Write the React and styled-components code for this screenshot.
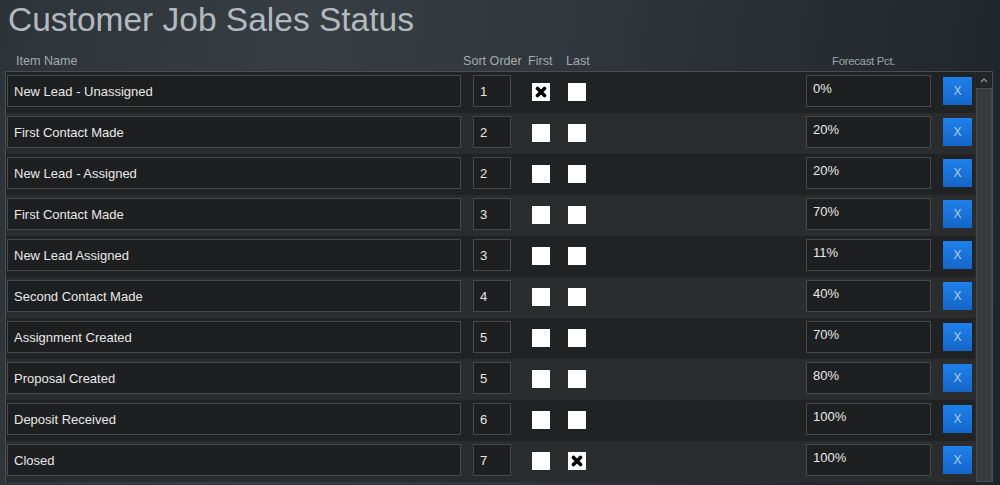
import React from "react";
import styled, { createGlobalStyle } from "styled-components";

const Global = createGlobalStyle`
  html, body { margin: 0; padding: 0; }
  body {
    width: 1000px;
    height: 485px;
    overflow: hidden;
    font-family: "Liberation Sans", Arial, sans-serif;
    background: linear-gradient(100deg, #2c3339 0%, #363d43 28%, #30373d 52%, #262c31 78%, #1f2429 100%);
  }
`;

const Page = styled.div`
  width: 1000px;
  height: 485px;
  display: flex;
  flex-direction: column;
`;

const Title = styled.h1`
  margin: 1px 0 0 8px;
  font-weight: normal;
  font-size: 33.5px;
  line-height: 38px;
  color: #b3babf;
`;

const HeaderRow = styled.div`
  margin-top: 14px;
  height: 16px;
  padding-left: 16px;
  display: flex;
  align-items: center;
  font-size: 12.6px;
  line-height: 16px;
  color: #a7abae;
`;

const HeadLabel = styled.span`
  width: ${(p) => p.$w}px;
  flex: none;
  white-space: nowrap;
`;

const SmallHead = styled.span`
  font-size: 11.4px;
  letter-spacing: -0.3px;
  color: #9ea3a6;
  white-space: nowrap;
`;

const Frame = styled.div`
  margin: 2px 0 0 5px;
  width: 986px;
  border: 1px solid #4a4f53;
  border-bottom: none;
  display: flex;
`;

const Rows = styled.div`
  flex: 1;
  display: flex;
  flex-direction: column;
`;

const Row = styled.div`
  height: 41px;
  box-sizing: border-box;
  padding: 3px 0 0 1px;
  display: flex;
  align-items: flex-start;
  background: ${(p) => (p.$alt ? "#2a2c2e" : "#202224")};
`;

const Field = styled.div`
  box-sizing: border-box;
  height: 32px;
  border: 1px solid #46494b;
  background: #1e1f20;
  color: #e8e8e8;
  font-size: 13px;
  padding: 0 6px;
  display: flex;
  align-items: center;
  white-space: nowrap;
`;

const NameField = styled(Field)`
  width: 454px;
`;

const SortField = styled(Field)`
  width: 38px;
  margin-left: 12px;
`;

const PctField = styled(Field)`
  width: 125px;
  margin-left: 220px;
  align-items: flex-start;
  padding-top: 5px;
`;

const Check = styled.div`
  width: 18px;
  height: 18px;
  margin-top: 8px;
  margin-left: ${(p) => p.$ml}px;
  background: #ffffff;
  display: flex;
  align-items: center;
  justify-content: center;
`;

const DeleteButton = styled.button`
  box-sizing: border-box;
  width: 29px;
  height: 28px;
  margin: 2px 0 0 12px;
  padding: 0;
  border: none;
  background: linear-gradient(#1f80ea, #1466c9);
  color: #b2cdee;
  font-family: "Liberation Sans", Arial, sans-serif;
  font-size: 12px;
  cursor: pointer;
`;

const Scrollbar = styled.div`
  width: 16px;
  display: flex;
  flex-direction: column;
  background: #3a3d40;
  border-left: 1px solid #2a2c2e;
`;

const ScrollUp = styled.div`
  height: 16px;
  background: #222528;
  display: flex;
  align-items: center;
  justify-content: center;
  border-bottom: 1px solid #4a4e52;
`;

const Track = styled.div`
  flex: 1;
  border: 1px solid #45494c;
  border-top: none;
  background: #393c3f;
`;

const XMark = () => (
  <svg width="12" height="12" viewBox="0 0 12 12">
    <path d="M2.5 2.5 L9.5 9.5 M9.5 2.5 L2.5 9.5" stroke="#000" strokeWidth="3.6" strokeLinecap="round" />
  </svg>
);

const rows = [
  { name: "New Lead - Unassigned", sort: 1, first: true, last: false, pct: "0%" },
  { name: "First Contact Made", sort: 2, first: false, last: false, pct: "20%" },
  { name: "New Lead - Assigned", sort: 2, first: false, last: false, pct: "20%" },
  { name: "First Contact Made", sort: 3, first: false, last: false, pct: "70%" },
  { name: "New Lead Assigned", sort: 3, first: false, last: false, pct: "11%" },
  { name: "Second Contact Made", sort: 4, first: false, last: false, pct: "40%" },
  { name: "Assignment Created", sort: 5, first: false, last: false, pct: "70%" },
  { name: "Proposal Created", sort: 5, first: false, last: false, pct: "80%" },
  { name: "Deposit Received", sort: 6, first: false, last: false, pct: "100%" },
  { name: "Closed", sort: 7, first: false, last: true, pct: "100%" },
];

export default function App() {
  return (
    <>
      <Global />
      <Page>
        <Title>Customer Job Sales Status</Title>
        <HeaderRow>
          <HeadLabel $w={447}>Item Name</HeadLabel>
          <HeadLabel $w={65}>Sort Order</HeadLabel>
          <HeadLabel $w={38}>First</HeadLabel>
          <HeadLabel $w={266}>Last</HeadLabel>
          <SmallHead>Forecast Pct.</SmallHead>
        </HeaderRow>
        <Frame>
          <Rows>
            {rows.map((r, i) => (
              <Row key={i} $alt={i % 2 === 1}>
                <NameField>{r.name}</NameField>
                <SortField>{r.sort}</SortField>
                <Check $ml={21}>{r.first && <XMark />}</Check>
                <Check $ml={18}>{r.last && <XMark />}</Check>
                <PctField>{r.pct}</PctField>
                <DeleteButton>X</DeleteButton>
              </Row>
            ))}
          </Rows>
          <Scrollbar>
            <ScrollUp>
              <svg width="8" height="5" viewBox="0 0 8 5">
                <path d="M1 4 L4 1 L7 4" stroke="#8d9296" strokeWidth="1.3" fill="none" />
              </svg>
            </ScrollUp>
            <Track />
          </Scrollbar>
        </Frame>
      </Page>
    </>
  );
}
